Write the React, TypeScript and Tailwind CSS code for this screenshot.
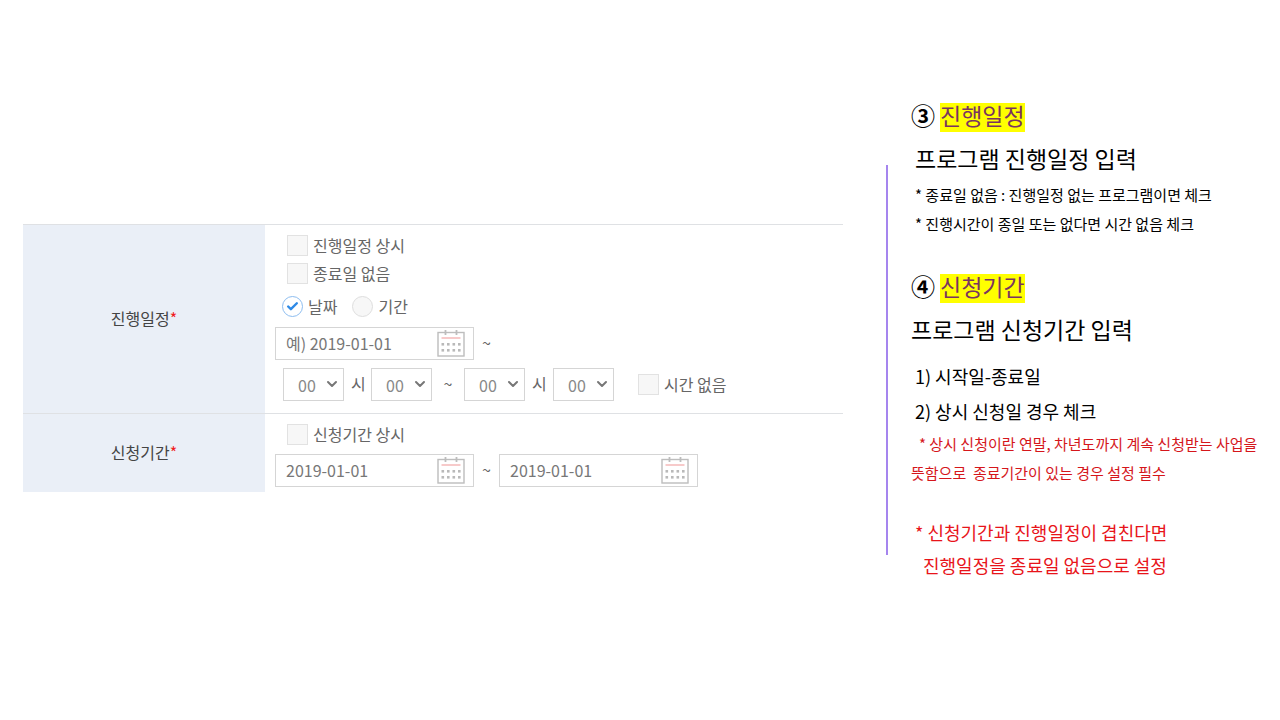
import { useState } from 'react';
import { Check, ChevronDown } from 'lucide-react';

const HOURS = Array.from({ length: 24 }, (_, i) => String(i).padStart(2, '0'));
const MINUTES = ['00', '10', '20', '30', '40', '50'];

function CalendarIcon() {
  return (
    <svg width="28" height="28" viewBox="0 0 28 28" fill="none">
      <rect x="1" y="3.5" width="26" height="23.5" stroke="#bdbdbd" strokeWidth="1.4" />
      <path d="M8.5 1v5M19.5 1v5" stroke="#bdbdbd" strokeWidth="1.8" />
      <path d="M4.5 9h19" stroke="#f6c4c4" strokeWidth="1.8" />
      {[14, 20].map((y) =>
        [4.5, 10, 15.5, 21].map((x) => (
          <rect key={`${x}-${y}`} x={x} y={y} width="2.6" height="2.6" fill="#b9b9b9" />
        ))
      )}
    </svg>
  );
}

function CheckItem({ label }: { label: string }) {
  return (
    <label className="flex w-fit items-center gap-[5px] leading-[21px]">
      <input
        type="checkbox"
        className="h-[21px] w-[21px] appearance-none border border-[#e2e2e2] bg-[#f7f7f7] checked:bg-[#3b8fe4]"
      />
      {label}
    </label>
  );
}

interface RadioItemProps {
  label: string;
  checked: boolean;
  onSelect: () => void;
}

function RadioItem({ label, checked, onSelect }: RadioItemProps) {
  return (
    <label className="flex items-center gap-[5px] leading-[21px]">
      <span className="relative flex">
        <input
          type="radio"
          name="dateType"
          checked={checked}
          onChange={onSelect}
          className="h-[21px] w-[21px] appearance-none rounded-full border border-[#dedede] bg-[#f7f7f7] checked:border-[#8dbdf0] checked:bg-white"
        />
        {checked && (
          <Check
            size={13}
            strokeWidth={4.5}
            className="pointer-events-none absolute inset-0 m-auto text-[#2f8ae6]"
          />
        )}
      </span>
      {label}
    </label>
  );
}

interface DateFieldProps {
  label: string;
  value?: string;
  placeholder?: string;
}

function DateField({ label, value, placeholder }: DateFieldProps) {
  return (
    <div className="flex h-[33px] w-[199px] items-center border border-[#d5d5d5] bg-white pr-2 pb-px pl-[10px]">
      <input
        type="text"
        aria-label={label}
        defaultValue={value}
        placeholder={placeholder}
        className="min-w-0 flex-1 text-[#777] outline-none placeholder:text-[#777]"
      />
      <button type="button" aria-label={`${label} 달력`}>
        <CalendarIcon />
      </button>
    </div>
  );
}

function TimeSelect({ label, options }: { label: string; options: string[] }) {
  return (
    <div className="relative">
      <select
        aria-label={label}
        className="block h-[33px] w-[61px] appearance-none border border-[#d5d5d5] bg-white pl-[14px] text-[#888]"
      >
        {options.map((o) => (
          <option key={o}>{o}</option>
        ))}
      </select>
      <ChevronDown
        size={16}
        strokeWidth={3}
        className="pointer-events-none absolute top-2 right-1 text-[#777]"
      />
    </div>
  );
}

function RowHeader({ children }: { children: string }) {
  return (
    <th scope="row" className="w-[242px] bg-[#eaeff7] pb-[2px] text-center font-normal text-[#444]">
      {children}
      <span className="text-[#f01c1c]">*</span>
    </th>
  );
}

function ScheduleForm() {
  const [dateType, setDateType] = useState('date');

  return (
    <table className="w-full border-collapse text-base text-[#666]">
      <tbody>
        <tr className="border-t border-[#dfe1e4]">
          <RowHeader>진행일정</RowHeader>
          <td className="pt-[10px] pb-3 pl-[10px]">
            <div className="flex flex-col gap-[7px] pl-3">
              <CheckItem label="진행일정 상시" />
              <CheckItem label="종료일 없음" />
            </div>
            <div className="mt-3 flex gap-[15px] pl-[7px]">
              <RadioItem label="날짜" checked={dateType === 'date'} onSelect={() => setDateType('date')} />
              <RadioItem label="기간" checked={dateType === 'period'} onSelect={() => setDateType('period')} />
            </div>
            <div className="mt-[10px] flex items-center">
              <DateField label="진행일" placeholder="예) 2019-01-01" />
              <span className="w-[25px] pb-1 text-center">~</span>
            </div>
            <div className="mt-2 flex items-center pl-2">
              <TimeSelect label="시작 시" options={HOURS} />
              <span className="w-[27px] pb-1 pl-[7px]">시</span>
              <TimeSelect label="시작 분" options={MINUTES} />
              <span className="w-8 pb-1 text-center">~</span>
              <TimeSelect label="종료 시" options={HOURS} />
              <span className="w-7 pb-1 pl-[7px]">시</span>
              <TimeSelect label="종료 분" options={MINUTES} />
              <div className="pl-6">
                <CheckItem label="시간 없음" />
              </div>
            </div>
          </td>
        </tr>
        <tr className="border-t border-[#dfe1e4]">
          <RowHeader>신청기간</RowHeader>
          <td className="pt-[10px] pb-[5px] pl-[10px]">
            <div className="pl-3">
              <CheckItem label="신청기간 상시" />
            </div>
            <div className="mt-[9px] flex items-center">
              <DateField label="신청 시작일" value="2019-01-01" />
              <span className="w-[25px] pb-1 text-center">~</span>
              <DateField label="신청 종료일" value="2019-01-01" />
            </div>
          </td>
        </tr>
      </tbody>
    </table>
  );
}

function GuideHeading({ no, children }: { no: string; children: string }) {
  return (
    <h2 className="flex items-start gap-[5px] text-[23px] leading-[25px]">
      <span className="text-2xl leading-[23px] font-bold">{no}</span>
      <mark className="bg-[#ffff00] pb-1 text-[#7a3560]">{children}</mark>
    </h2>
  );
}

function Guide() {
  return (
    <aside className="w-[394px] shrink-0 pt-[103px] whitespace-nowrap text-black">
      <div className="relative pl-[25px]">
        <div className="absolute top-[62px] left-0 h-[390px] w-[2px] bg-[#a585ee]" />

        <GuideHeading no="③">진행일정</GuideHeading>
        <p className="mt-2 mb-1 pl-1 text-[23px] leading-9">프로그램 진행일정 입력</p>
        <p className="pl-1 text-[15px] leading-[29px]">* 종료일 없음 : 진행일정 없는 프로그램이면 체크</p>
        <p className="pl-1 text-[15px] leading-[29px]">* 진행시간이 종일 또는 없다면 시간 없음 체크</p>

        <div className="mt-9">
          <GuideHeading no="④">신청기간</GuideHeading>
          <p className="mt-2 mb-3 text-[23px] leading-9">프로그램 신청기간 입력</p>
          <ol className="pl-1 text-lg leading-[35px]">
            <li>1) 시작일-종료일</li>
            <li>2) 상시 신청일 경우 체크</li>
          </ol>
          <p className="text-[15px] leading-[29px] text-[#d5161b]">
            <span className="pl-2">* 상시 신청이란 연말, 차년도까지 계속 신청받는 사업을</span>
            <br />
            뜻함으로&nbsp; 종료기간이 있는 경우 설정 필수
          </p>
        </div>

        <p className="mt-[29px] pl-1 text-lg leading-[33px] text-[#e8141a]">
          * 신청기간과 진행일정이 겹친다면
          <br />
          <span className="pl-2">진행일정을 종료일 없음으로 설정</span>
        </p>
      </div>
    </aside>
  );
}

export default function App() {
  return (
    <div className="flex min-h-screen bg-white font-['Noto_Sans_CJK_KR',sans-serif]">
      <main className="min-w-0 flex-1 pt-56 pr-[43px] pl-[23px]">
        <ScheduleForm />
      </main>
      <Guide />
    </div>
  );
}
